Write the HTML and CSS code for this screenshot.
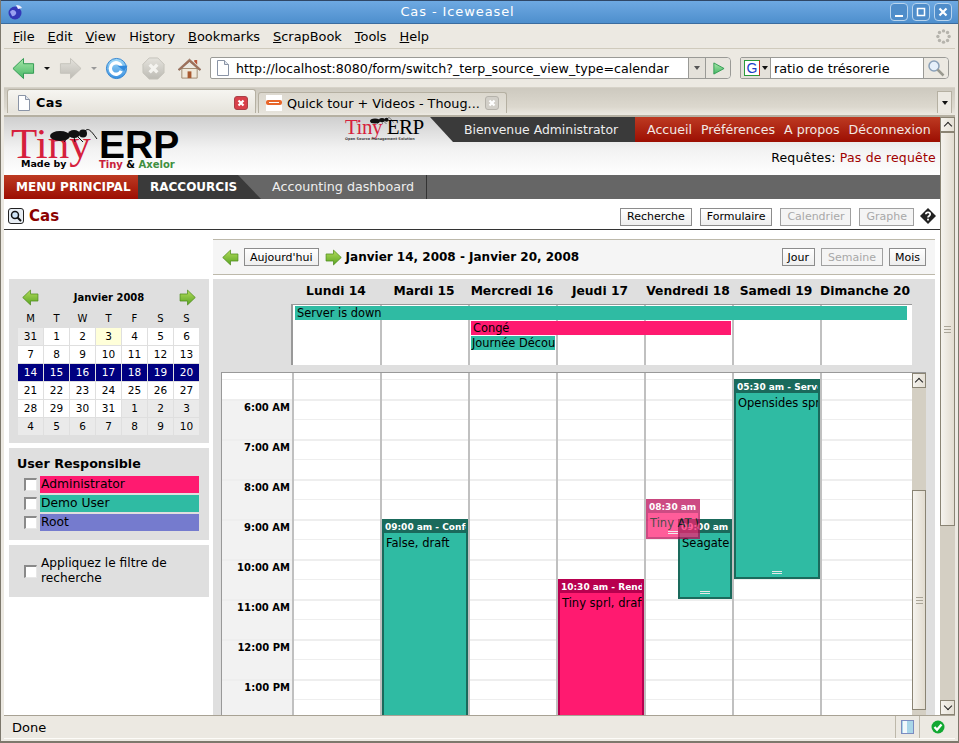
FILE: index.html
```html
<!DOCTYPE html>
<html lang="fr">
<head>
  <meta charset="UTF-8" />
  <title>Cas - Iceweasel</title>
  <link rel="stylesheet" href="styles.css">
</head>
<body>
<svg class="defs" width="0" height="0">
  <defs>
    <linearGradient id="gArrow" x1="0" y1="0" x2="0" y2="1"><stop offset="0" stop-color="#a8e8a8"/><stop offset="1" stop-color="#45b565"/></linearGradient>
    <linearGradient id="gGrey" x1="0" y1="0" x2="0" y2="1"><stop offset="0" stop-color="#e4e2dc"/><stop offset="1" stop-color="#bdbbb4"/></linearGradient>
    <linearGradient id="gLeaf" x1="0" y1="0" x2="0" y2="1"><stop offset="0" stop-color="#b4dc5c"/><stop offset="1" stop-color="#5aa522"/></linearGradient>
    <linearGradient id="gBlue" x1="0" y1="0" x2="0" y2="1"><stop offset="0" stop-color="#a4dcf8"/><stop offset="1" stop-color="#3a90e0"/></linearGradient>
    <symbol id="arrow" viewBox="0 0 24 24"><path d="M1 12 12 1.500V7h10.500v10H12v5.500z"/></symbol>
    <symbol id="page" viewBox="0 0 14 16"><path d="M1.500.5h7l4 4v11h-11z" fill="#fff" stroke="#8a94a6"/><path d="M8.500.5v4h4" fill="#dfe4ec" stroke="#8a94a6"/></symbol>
    <symbol id="x" viewBox="0 0 14 14"><rect x=".5" y=".5" width="13" height="13" rx="2.500"/><path d="m4.500 4.500 5 5m0-5-5 5" stroke="#fff" stroke-width="2.200"/></symbol>
    <symbol id="ant" viewBox="0 0 48 14"><g fill="#111"><ellipse cx="10" cy="8" rx="10" ry="5"/><ellipse cx="24" cy="6" rx="6" ry="4"/><circle cx="33" cy="5.500" r="4"/></g><path d="M35 3c3-3 5-2 12 8M18 9l-4 5M24 9l1 5M28 9l5 5" fill="none" stroke="#111" stroke-width="1"/></symbol>
    <symbol id="glass" viewBox="0 0 18 18"><circle cx="7" cy="7" r="5" fill="#e6f0fa" stroke="#8aa0b8" stroke-width="1.500"/><path d="m10.500 10.500 6 6" stroke="#9a9a90" stroke-width="2.500"/></symbol>
  </defs>
</svg>

<div class="window">
  <div class="titlebar">
    <svg class="app-icon" viewBox="0 0 16 16"><circle cx="8" cy="9" r="6.500" fill="#3438b8"/><path d="M3 8c2-3 5-2 6 0s-2 5-4 4" fill="#9aa0f0"/><path d="M9 1c3 0 5 1 6 3l-4 1z" fill="#eef"/></svg>
    <div class="title">Cas - Iceweasel</div>
    <div class="wm-buttons">
      <span class="wm"><svg viewBox="0 0 14 14"><path d="M3 11h8" stroke="#fff" stroke-width="2"/></svg></span>
      <span class="wm"><svg viewBox="0 0 14 14"><rect x="3.500" y="3.500" width="7" height="7" fill="none" stroke="#fff" stroke-width="1.500"/></svg></span>
      <span class="wm"><svg viewBox="0 0 14 14"><path d="m3.500 3.500 7 7m0-7-7 7" stroke="#fff" stroke-width="2.200"/></svg></span>
    </div>
  </div>

  <div class="menubar">
    <span><u>F</u>ile</span>
    <span><u>E</u>dit</span>
    <span><u>V</u>iew</span>
    <span>Hi<u>s</u>tory</span>
    <span><u>B</u>ookmarks</span>
    <span><u>S</u>crapBook</span>
    <span><u>T</u>ools</span>
    <span><u>H</u>elp</span>
    <svg class="spinner" viewBox="0 0 16 16"><g fill="#b5b3ac"><circle cx="8" cy="2" r="1.800"/><circle cx="12.300" cy="3.700" r="1.800"/><circle cx="14" cy="8" r="1.800"/><circle cx="12.300" cy="12.300" r="1.800"/><circle cx="8" cy="14" r="1.800"/><circle cx="3.700" cy="12.300" r="1.800"/><circle cx="2" cy="8" r="1.800"/><circle cx="3.700" cy="3.700" r="1.800"/></g></svg>
  </div>

  <div class="navbar">
    <svg class="nav-ico back"><use href="#arrow"/></svg>
    <span class="drop"></span>
    <svg class="nav-ico fwd flip"><use href="#arrow"/></svg>
    <span class="drop off"></span>
    <svg class="nav-ico reload" viewBox="0 0 24 24"><circle cx="12" cy="12" r="10.500" fill="url(#gBlue)" stroke="#2a80d0"/><path d="M17 9.500a6 6 0 1 0 0 5" fill="none" stroke="#fff" stroke-width="3.500"/><path d="M13 9h10.500L20 14.500z" fill="#2f88dc"/></svg>
    <svg class="nav-ico stop" viewBox="0 0 24 24"><path d="M7.500 1h9L23 7.500v9L16.500 23h-9L1 16.500v-9z" fill="url(#gGrey)" stroke="#c4c2bb"/><path d="m8 8 8 8m0-8-8 8" stroke="#f4f3ef" stroke-width="3.500"/></svg>
    <svg class="nav-ico home" viewBox="0 0 24 24"><path d="M4 12v10h16V12z" fill="#efe8da" stroke="#a08a70"/><path d="M10 22v-7h4v7z" fill="#a85a30"/><path d="M0 13 12 2l12 11-1.500 1L12 5 1.500 14z" fill="#a0705a" stroke="#7c5a48" stroke-width=".5"/><path d="M17 3h3v5l-3-3z" fill="#b8553a"/></svg>

    <div class="urlbar">
      <svg class="url-page"><use href="#page"/></svg>
      <span class="url-text">http://localhost:8080/form/switch?_terp_source_view_type=calendar</span>
      <span class="url-drop"><i></i></span>
      <span class="url-go"><svg viewBox="0 0 14 14"><path d="M2 1l11 6-11 6z" fill="url(#gArrow)" stroke="#2f9a50"/></svg></span>
    </div>

    <div class="searchbar">
      <span class="engine"><b class="g-mark">G</b><i></i></span>
      <span class="search-text">ratio de trésorerie</span>
      <span class="search-go"><svg><use href="#glass"/></svg></span>
    </div>
  </div>

  <div class="tabbar">
    <div class="tab active">
      <svg class="tab-ico"><use href="#page"/></svg>
      <span class="tab-label">Cas</span>
      <svg class="tab-x red"><use href="#x"/></svg>
    </div>
    <div class="tab">
      <svg class="tab-fav" viewBox="0 0 16 16"><rect width="16" height="16" fill="#fff"/><rect x="0" y="5" width="16" height="5" rx="2" fill="#e8662a"/><rect x="3" y="7" width="10" height="1" fill="#fff"/></svg>
      <span class="tab-label">Quick tour + Videos - Thoug...</span>
      <svg class="tab-x grey"><use href="#x"/></svg>
    </div>
    <span class="tab-list"><i></i></span>
  </div>

  <div class="viewport">
    <div class="page">
      <div class="header">
        <div class="logo">
          <div class="logo-left">
            <div class="logo-tiny">Tiny</div>
            <div class="logo-made">Made by</div>
          </div>
          <div class="logo-right">
            <div class="logo-erp">ERP</div>
            <div class="logo-by"><span class="c-red">Tiny</span> &amp; <span class="c-green">Axelor</span></div>
          </div>
          <svg class="logo-ant"><use href="#ant"/></svg>
        </div>
        <div class="header-right">
          <div class="top-strip">
            <div class="small-logo">
              <div class="small-name"><span class="c-crimson">Tiny</span> ERP</div>
              <div class="small-tag">Open Source Management Solution</div>
              <svg class="small-ant"><use href="#ant"/></svg>
            </div>
            <div class="welcome">Bienvenue Administrator</div>
            <div class="toplinks">
              <span>Accueil</span><span>Préférences</span><span>A propos</span><span>Déconnexion</span>
            </div>
          </div>
          <div class="requests">Requêtes: <span class="c-dark">Pas de requête</span></div>
        </div>
      </div>

      <div class="mainmenu">
        <div class="menu-red">MENU PRINCIPAL</div>
        <div class="menu-dark">RACCOURCIS</div>
        <div class="menu-link">Accounting dashboard</div>
      </div>

      <div class="view-title">
        <svg class="find-ico" viewBox="0 0 16 16"><rect x=".5" y=".5" width="15" height="15" rx="2.500" fill="#e8eef4" stroke="#222"/><circle cx="7" cy="7" r="3.500" fill="#cfe4f6" stroke="#111" stroke-width="1.500"/><path d="m9.500 9.500 3.500 3.500" stroke="#111" stroke-width="2"/></svg>
        <h1>Cas</h1>
        <div class="view-buttons">
          <button>Recherche</button>
          <button>Formulaire</button>
          <button class="off">Calendrier</button>
          <button class="off">Graphe</button>
          <svg class="help" viewBox="0 0 16 16"><path d="M8 0l8 8-8 8-8-8z" fill="#222"/><path d="M5.800 6.200C6 3.800 10.200 3.800 10.200 6.300 10.200 8 8 8 8 9.600" fill="none" stroke="#fff" stroke-width="1.700"/><rect x="7.100" y="10.700" width="1.800" height="1.800" fill="#fff"/></svg>
        </div>
      </div>

      <div class="content">
        <aside class="sidebar">
          <div class="side-box mini-cal">
            <div class="mini-head">
              <svg class="leaf"><use href="#arrow"/></svg>
              <span>Janvier 2008</span>
              <svg class="leaf flip"><use href="#arrow"/></svg>
            </div>
            <div class="mini-grid">
              <b>M</b><b>T</b><b>W</b><b>T</b><b>F</b><b>S</b><b>S</b>
              <span class="other">31</span><span>1</span><span>2</span><span class="today">3</span><span>4</span><span>5</span><span>6</span>
              <span>7</span><span>8</span><span>9</span><span>10</span><span>11</span><span>12</span><span>13</span>
              <span class="sel">14</span><span class="sel">15</span><span class="sel">16</span><span class="sel">17</span><span class="sel">18</span><span class="sel">19</span><span class="sel">20</span>
              <span>21</span><span>22</span><span>23</span><span>24</span><span>25</span><span>26</span><span>27</span>
              <span>28</span><span>29</span><span>30</span><span>31</span><span class="other">1</span><span class="other">2</span><span class="other">3</span>
              <span class="other">4</span><span class="other">5</span><span class="other">6</span><span class="other">7</span><span class="other">8</span><span class="other">9</span><span class="other">10</span>
            </div>
          </div>

          <div class="side-box users">
            <h3>User Responsible</h3>
            <div class="user"><i class="check"></i><span class="c-admin">Administrator</span></div>
            <div class="user"><i class="check"></i><span class="c-demo">Demo User</span></div>
            <div class="user"><i class="check"></i><span class="c-root">Root</span></div>
          </div>

          <div class="side-box filter">
            <i class="check"></i>
            <span>Appliquez le filtre de recherche</span>
          </div>
        </aside>

        <main class="calendar">
          <div class="cal-nav">
            <svg class="leaf"><use href="#arrow"/></svg>
            <button>Aujourd'hui</button>
            <svg class="leaf flip"><use href="#arrow"/></svg>
            <strong>Janvier 14, 2008 - Janvier 20, 2008</strong>
            <div class="cal-modes">
              <button>Jour</button>
              <button class="off">Semaine</button>
              <button>Mois</button>
            </div>
          </div>

          <div class="cal-body">
            <div class="day-heads">
              <span>Lundi 14</span><span>Mardi 15</span><span>Mercredi 16</span><span>Jeudi 17</span><span>Vendredi 18</span><span>Samedi 19</span><span>Dimanche 20</span>
            </div>

            <div class="allday">
              <div class="ad-event ad-server c-demo">Server is down</div>
              <div class="ad-event ad-conge c-admin">Congé</div>
              <div class="ad-event ad-journee c-demo">Journée Découverte</div>
            </div>

            <div class="timegrid">
              <div class="gutter">
                <div class="gutter-top"></div>
                <div class="hour">6:00 AM</div>
                <div class="hour">7:00 AM</div>
                <div class="hour">8:00 AM</div>
                <div class="hour">9:00 AM</div>
                <div class="hour">10:00 AM</div>
                <div class="hour">11:00 AM</div>
                <div class="hour">12:00 PM</div>
                <div class="hour">1:00 PM</div>
              </div>
              <div class="days">
                <div class="event teal ev-mardi">
                  <div class="ev-head">09:00 am - Conférence</div>
                  <div class="ev-text">False, draft</div>
                </div>
                <div class="event pink ev-jeudi">
                  <div class="ev-head">10:30 am - Rendez-vous</div>
                  <div class="ev-text">Tiny sprl, draft</div>
                </div>
                <div class="event teal ev-samedi">
                  <div class="ev-head">05:30 am - Server</div>
                  <div class="ev-text">Opensides sprl</div>
                  <i class="grip"></i>
                </div>
                <div class="event teal ev-seagate">
                  <div class="ev-head">09:00 am - Visite</div>
                  <div class="ev-text">Seagate</div>
                  <i class="grip"></i>
                </div>
                <div class="event pink ev-tiny">
                  <div class="ev-head">08:30 am - Visite</div>
                  <div class="ev-text">Tiny AT Work</div>
                  <i class="grip"></i>
                </div>
              </div>
              <div class="vscroll inner">
                <span class="sb-btn up"></span>
                <span class="sb-trough inner-top"></span>
                <span class="sb-thumb"><i></i></span>
                <span class="sb-trough inner-bottom"></span>
              </div>
            </div>
          </div>
        </main>
      </div>
    </div>

    <div class="vscroll outer">
      <span class="sb-btn up"></span>
      <span class="sb-thumb"><i></i></span>
      <span class="sb-trough"></span>
      <span class="sb-btn down"></span>
    </div>
  </div>

  <div class="statusbar">
    <span class="status-text">Done</span>
    <span class="status-cell sc-book"><svg viewBox="0 0 14 14"><rect x=".5" y=".5" width="12" height="13" fill="#a9d6e8" stroke="#7c8cc0"/><rect x="2" y="1" width="4" height="12" fill="#f2f8fb"/></svg></span>
    <span class="status-cell sc-ok"><svg viewBox="0 0 14 14"><circle cx="7" cy="7" r="6.500" fill="#12a832"/><path d="m3.500 7 2.500 2.700L10.500 4.500" fill="none" stroke="#fff" stroke-width="2.300"/></svg></span>
  </div>
</div>
</body>
</html>
```

FILE: styles.css
```css
* {
  box-sizing: border-box;
}

html, body {
  margin: 0;
  padding: 0;
}

body {
  width: 959px;
  height: 743px;
  overflow: hidden;
  font-family: "DejaVu Sans", sans-serif;
  font-size: 12px;
  color: #000;
  background: #ece9e2;
}

.defs {
  position: absolute;
}

button {
  font-family: "DejaVu Sans", sans-serif;
  font-size: 11px;
  height: 18px;
  padding: 0 6px;
  background: linear-gradient(#fff, #eee);
  border: 1px solid #8c8c8c;
  border-radius: 0;
  color: #000;
}

button.off {
  color: #a8a8a8;
  border-color: #a0a0a0;
  background: #f4f4f4;
}

.flip {
  transform: scaleX(-1);
}

/* window chrome */

.window {
  width: 959px;
  height: 743px;
  display: flex;
  flex-direction: column;
  border: solid #7d786c;
  border-width: 0 1px 2px;
  padding: 0 3px 2px;
  background: #ece9e2;
}

.titlebar {
  height: 24px;
  margin: 0 -3px;
  flex: none;
  display: flex;
  align-items: center;
  position: relative;
  background: linear-gradient(#6ea9e2, #4e8fcd);
  border-top: 1px solid #2f4766;
  border-bottom: 1px solid #3b6c9f;
  color: #fff;
}

.app-icon {
  width: 16px;
  height: 16px;
  margin-left: 6px;
}

.title {
  position: absolute;
  left: 0;
  right: 0;
  text-align: center;
  font-size: 13px;
  line-height: 20px;
  letter-spacing: .9px;
  padding-right: 44px;
}

.wm-buttons {
  margin-left: auto;
  margin-right: 6px;
  display: flex;
  gap: 4px;
}

.wm {
  width: 18px;
  height: 18px;
  border: 1px solid #b8d4ee;
  border-radius: 4px;
  background: #4f8dca;
  display: flex;
  align-items: center;
  justify-content: center;
}

.wm svg {
  width: 14px;
  height: 14px;
}

.menubar {
  height: 25px;
  flex: none;
  display: flex;
  align-items: center;
  gap: 13px;
  font-size: 12.900px;
  border-bottom: 1px solid #cfcabc;
  padding-left: 9px;
}

.spinner {
  width: 15px;
  height: 15px;
  margin-left: auto;
  margin-right: 4px;
}

.navbar {
  height: 39px;
  flex: none;
  display: flex;
  align-items: center;
  padding-left: 8px;
  border-bottom: 1px solid #d6d2c8;
}

.nav-ico {
  width: 23px;
  height: 23px;
  flex: none;
}

.back {
  fill: url(#gArrow);
  stroke: #2f9a50;
}

.fwd {
  margin-left: 9px;
  fill: url(#gGrey);
  stroke: #c4c2bb;
}

.drop {
  width: 0;
  height: 0;
  margin-left: 9px;
  border: 3px solid transparent;
  border-top: 3px solid #111;
  border-bottom: 0;
  flex: none;
}

.drop.off {
  margin-left: 9px;
  border-top-color: #999;
}

.reload { margin-left: 8px; }
.stop { margin-left: 14px; }
.home { margin-left: 13px; }

.urlbar {
  width: 521px;
  height: 22px;
  margin-left: 9px;
  flex: none;
  display: flex;
  align-items: center;
  background: #fff;
  border: 1px solid #9a9a96;
  border-radius: 2px 4px 4px 2px;
  font-size: 12.650px;
}

.url-page {
  width: 14px;
  height: 16px;
  margin-left: 5px;
}

.url-text {
  margin-left: 6px;
  flex: 1;
  white-space: nowrap;
  overflow: hidden;
}

.url-drop {
  width: 17px;
  height: 20px;
  background: #e4e1da;
  border-left: 1px solid #9a9a96;
  display: flex;
  align-items: center;
  justify-content: center;
}

.url-drop i, .engine i, .tab-list i {
  width: 0;
  height: 0;
  border: 3px solid transparent;
  border-top: 4px solid #555;
  border-bottom: 0;
}

.url-go {
  width: 25px;
  height: 20px;
  background: #e8e5de;
  border-left: 1px solid #9a9a96;
  border-radius: 0 4px 4px 0;
  display: flex;
  align-items: center;
  justify-content: center;
}

.url-go svg {
  width: 13px;
  height: 13px;
}

.searchbar {
  width: 209px;
  height: 22px;
  margin-left: 9px;
  flex: none;
  display: flex;
  align-items: center;
  background: #fff;
  border: 1px solid #9a9a96;
  border-radius: 2px 4px 4px 2px;
  font-size: 12.800px;
}

.engine {
  width: 30px;
  height: 20px;
  flex: none;
  background: #e4e1da;
  border-right: 1px solid #9a9a96;
  display: flex;
  align-items: center;
  gap: 2px;
  padding-left: 3px;
}

.engine i {
  border-top-color: #111;
}

.g-mark {
  width: 16px;
  height: 16px;
  font: 14px/14px "Liberation Sans", sans-serif;
  color: #1a3cc8;
  text-align: center;
  background: #fff;
  border: 1px solid;
  border-color: #2a9a3a #d02a20 #2a9a3a #2a9a3a;
}

.search-text {
  margin-left: 3px;
  flex: 1;
}

.search-go {
  width: 25px;
  height: 20px;
  background: #ece9e2;
  border-left: 1px solid #9a9a96;
  border-radius: 0 4px 4px 0;
  display: flex;
  align-items: center;
  justify-content: center;
}

.search-go svg {
  width: 18px;
  height: 18px;
}

.tabbar {
  height: 28px;
  flex: none;
  display: flex;
  align-items: flex-end;
  gap: 2px;
  padding-left: 3px;
  padding-bottom: 2px;
  background: linear-gradient(#cdc9bf, #dcd8ce 70%, #ece9e2);
  border-bottom: 1px solid #b5b0a2;
  font-size: 12.800px;
}

.tab {
  width: 249px;
  height: 21px;
  display: flex;
  align-items: center;
  padding: 0 7px;
  border: 1px solid #b5b0a2;
  border-bottom: 0;
  border-radius: 3px 3px 0 0;
  background: linear-gradient(#dcd8ce, #e6e3db);
}

.tab.active {
  height: 24px;
  padding-top: 2px;
  background: linear-gradient(#f6f5f1, #e6e3db);
}

.tab.active .tab-label {
  font-weight: bold;
  letter-spacing: .3px;
}

.tab-ico {
  width: 14px;
  height: 16px;
  margin-left: 2px;
}

.tab-fav {
  width: 16px;
  height: 16px;
}

.tab-label {
  margin-left: 5px;
  flex: 1;
  white-space: nowrap;
}

.tab-x {
  width: 14px;
  height: 14px;
}

.tab-x.red {
  fill: #d8404a;
  stroke: #a84048;
}

.tab-x.grey {
  fill: #d2cfc8;
  stroke: #b5b2aa;
}

.tab-list {
  margin-left: auto;
  margin-right: 3px;
  width: 15px;
  height: 22px;
  border: 1px solid #b5b0a2;
  border-bottom: 0;
  background: #ece9e2;
  display: flex;
  align-items: center;
  justify-content: center;
}

.tab-list i {
  border-top-color: #111;
}

.viewport {
  flex: 1;
  display: flex;
  min-height: 0;
  overflow: hidden;
  background: #fff;
  border-top: 1px solid #b5b0a2;
}

.page {
  width: 936px;
  flex: none;
  background: #fff;
}

/* header */

.header {
  height: 58px;
  display: flex;
  justify-content: space-between;
  background: linear-gradient(#cfcfcf, #f2f2f2 55%, #fff);
}

.logo {
  position: relative;
  display: flex;
  padding: 9px 0 0 7px;
  width: 200px;
}

.logo-left {
  width: 88px;
}

.logo-tiny {
  font: 43px/35px "Liberation Serif", serif;
  color: #d6203c;
}

.logo-made {
  margin: -4px 0 0 10px;
  font-size: 9.500px;
  font-weight: bold;
  line-height: 13px;
}

.logo-right {
  padding-top: 3px;
}

.logo-erp {
  font: bold 39px/31px "Liberation Sans", sans-serif;
}

.logo-by {
  margin-top: -2px;
  font-size: 10px;
  font-weight: bold;
  line-height: 13px;
}

.c-red { color: #c8203c; }
.c-green { color: #3f8f3f; }
.c-crimson { color: #d6203c; }
.c-dark { color: #a00000; }

.logo-ant {
  position: absolute;
  left: 46px;
  top: 11px;
  width: 48px;
  height: 14px;
}

.header-right {
  display: flex;
  flex-direction: column;
  align-items: flex-end;
}

.top-strip {
  height: 25px;
  display: flex;
}

.small-logo {
  position: relative;
  width: 85px;
  padding-top: 1px;
}

.small-name {
  font: 21px/19px "Liberation Serif", serif;
  letter-spacing: -.5px;
}

.small-tag {
  font-size: 3.500px;
  line-height: 4px;
  white-space: nowrap;
  font-weight: bold;
  color: #444;
}

.small-ant {
  position: absolute;
  left: 25px;
  top: 0;
  width: 24px;
  height: 7px;
}

.welcome {
  width: 205px;
  padding-left: 34px;
  line-height: 25px;
  color: #eee;
  background: #3a3a3a;
  clip-path: polygon(0 0, 100% 0, 100% 100%, 23px 100%);
  font-size: 12.400px;
  white-space: nowrap;
}

.toplinks {
  width: 305px;
  display: flex;
  gap: 9px;
  padding-left: 12px;
  line-height: 25px;
  color: #f2e8e4;
  background: linear-gradient(#bd3a22, #9c0e02);
  font-size: 12.600px;
  white-space: nowrap;
}

.requests {
  margin-top: 8px;
  padding-right: 4px;
  font-size: 12.500px;
  letter-spacing: .2px;
}

/* main menu */

.mainmenu {
  height: 24px;
  display: flex;
  background: #666;
  color: #fff;
  line-height: 24px;
}

.menu-red {
  width: 134px;
  padding-left: 12px;
  font-size: 12px;
  font-weight: bold;
  white-space: nowrap;
  background: linear-gradient(#bd3a22, #9c0e02);
}

.menu-dark {
  width: 123px;
  padding-left: 12px;
  font-size: 12px;
  font-weight: bold;
  background: #3a3a3a;
  clip-path: polygon(0 0, 100px 0, 123px 100%, 0 100%);
}

.menu-link {
  width: 166px;
  padding-left: 11px;
  border-right: 1px solid #333;
  color: #eee;
  font-size: 12.700px;
  white-space: nowrap;
}

.view-title {
  height: 31px;
  display: flex;
  align-items: center;
  padding: 4px 4px 0;
  border-bottom: 1px solid #333;
}

.find-ico {
  width: 16px;
  height: 16px;
}

.view-title h1 {
  margin: 0 0 0 5px;
  font-size: 15px;
  color: #8b0000;
}

.view-buttons {
  margin-left: auto;
  display: flex;
  align-items: center;
  gap: 8px;
  padding-top: 1px;
}

.help {
  width: 16px;
  height: 16px;
  margin-left: -2px;
  margin-top: -2px;
}

.content {
  display: flex;
}

/* sidebar */

.sidebar {
  width: 209px;
  flex: none;
  padding: 49px 4px 0 5px;
  display: flex;
  flex-direction: column;
  gap: 5px;
}

.side-box {
  background: #dfdfdf;
}

.mini-cal {
  height: 164px;
  padding: 8px 9px 0;
}

.mini-head {
  height: 20px;
  display: flex;
  align-items: center;
  justify-content: space-between;
  padding: 0 4px;
  font-size: 10px;
  font-weight: bold;
}

.leaf {
  width: 17px;
  height: 17px;
  fill: url(#gLeaf);
  stroke: #4a8a18;
  flex: none;
}

.mini-grid {
  display: grid;
  grid-template-columns: repeat(7, 25px);
  grid-template-rows: 17px repeat(6, 17px);
  gap: 1px;
  margin-top: 3px;
  font-size: 10.500px;
  text-align: center;
  line-height: 17px;
}

.mini-grid b {
  font-weight: normal;
  font-size: 10px;
  margin-bottom: -2px;
}

.mini-grid span {
  background: #fff;
}

.mini-grid .other {
  background: #eaeaea;
}

.mini-grid .today {
  background: #ffffd9;
}

.mini-grid .sel {
  background: #000080;
  color: #fff;
}

.users {
  height: 92px;
  padding: 8px 0 0 8px;
}

.users h3 {
  margin: 0 0 4px;
  font-size: 12.700px;
  line-height: 15px;
}

.user {
  display: flex;
  align-items: center;
  height: 19px;
  padding-left: 7px;
  font-size: 12.300px;
}

.user span {
  width: 159px;
  height: 17px;
  padding-left: 1px;
  line-height: 17px;
}

.c-admin { background: #ff1a70; }
.c-demo { background: #2fbba3; }
.c-root { background: #757bce; }

.check {
  width: 13px;
  height: 13px;
  flex: none;
  margin-right: 3px;
  background: #fff;
  border: 1px solid;
  border-color: #8a8a8a #e8e8e8 #e8e8e8 #8a8a8a;
  border-width: 2px 1px 1px 2px;
}

.filter {
  height: 52px;
  display: flex;
  align-items: center;
  padding-left: 15px;
  font-size: 12.200px;
  line-height: 15px;
}

.filter .check {
  margin-right: 4px;
}

/* calendar */

.calendar {
  width: 722px;
  flex: none;
}

.cal-nav {
  height: 36px;
  margin-top: 9px;
  display: flex;
  align-items: center;
  padding: 0 9px;
  gap: 3px;
  background: #f5f5f5;
  border: solid #bdb9ab;
  border-width: 1px 0;
}

.cal-nav > button {
  margin: 0 3px 0 2px;
  padding: 0 5px;
}

.cal-nav strong {
  margin-left: 1px;
  font-size: 12px;
}

.cal-modes {
  margin-left: auto;
  display: flex;
  gap: 6px;
}

.cal-modes button:first-child,
.cal-modes button:last-child {
  padding: 0 5px;
}

.cal-body {
  margin-top: 4px;
  height: 436px;
  background: #dfdfdf;
  padding-left: 8px;
  overflow: hidden;
}

.day-heads {
  height: 25px;
  margin-left: 71px;
  display: grid;
  grid-template-columns: repeat(7, 88px);
  font-size: 12.300px;
  font-weight: bold;
  line-height: 24px;
  text-align: center;
  white-space: nowrap;
}

.allday {
  width: 621px;
  height: 61px;
  margin-left: 70px;
  display: grid;
  grid-template-columns: 87px repeat(6, 88px) 6px;
  grid-template-rows: 15px 15px 15px;
  background: #fff repeating-linear-gradient(90deg, #c0c0c0 0 2px, transparent 2px 88px) 87px 0 / 442px 100% no-repeat;
  border: solid #999;
  border-width: 1px 0 0 2px;
  font-size: 11.400px;
  line-height: 15px;
}

.ad-event {
  height: 14px;
  margin: 1px 1px 0 3px;
  padding-left: 2px;
  white-space: nowrap;
  overflow: hidden;
}

.ad-server {
  grid-row: 1;
  grid-column: 1 / 8;
  margin-left: 2px;
}

.ad-conge {
  grid-row: 2;
  grid-column: 3 / 6;
}

.ad-journee {
  grid-row: 3;
  grid-column: 3;
  padding-left: 1px;
}

.timegrid {
  width: 705px;
  height: 343px;
  margin-top: 7px;
  display: flex;
  border: solid #999;
  border-width: 1px 0 0 1px;
}

.gutter {
  width: 70px;
  flex: none;
  background: #f2f2f2;
  font-size: 10px;
  font-weight: bold;
  text-align: right;
}

.gutter-top {
  height: 26px;
  background: #fff linear-gradient(#eee, #eee) 0 6px / 100% 1px no-repeat;
}

.hour {
  height: 40px;
  padding: 1px 2px 0 0;
  line-height: 12px;
  border-top: 2px solid #eee;
  white-space: nowrap;
}

.days {
  position: relative;
  width: 620px;
  flex: none;
  overflow: hidden;
  background-color: #fff;
  background-image:
    repeating-linear-gradient(90deg, #c0c0c0 0 2px, transparent 2px 88px),
    repeating-linear-gradient(180deg, #eee 0 2px, transparent 2px 20px, #eee 20px 21px, transparent 21px 40px);
  background-position: 0 0, 0 26px;
  background-size: 530px 100%, 100% 40px;
  background-repeat: no-repeat, repeat-y;
}

/* events are placed by time and day on the grid */

.event {
  position: absolute;
  overflow: hidden;
  border: 2px solid;
  border-top: 0;
  width: 86px;
}

.ev-head {
  height: 14px;
  margin: 0 -2px;
  padding: 1px 0 0 3px;
  color: #fff;
  font-size: 9px;
  font-weight: bold;
  line-height: 14px;
  white-space: nowrap;
  overflow: hidden;
}

.ev-text {
  padding: 3px 0 0 2px;
  font-size: 11.500px;
  line-height: 14px;
  white-space: nowrap;
  overflow: hidden;
}

.grip {
  position: absolute;
  left: 50%;
  bottom: 3px;
  width: 10px;
  height: 3px;
  margin-left: -5px;
  border: solid #e8e8e8;
  border-width: 1px 0;
}

.teal {
  background: #2fbba3;
  border-color: #1a6a5c;
}

.teal .ev-head {
  background: #1a6a5c;
}

.pink {
  background: #ff1a70;
  border-color: #b8004f;
}

.pink .ev-head {
  background: #b8004f;
}

.ev-mardi { left: 90px; top: 146px; height: 300px; }
.ev-jeudi { left: 266px; top: 206px; height: 300px; }
.ev-samedi { left: 442px; top: 6px; height: 200px; }
.ev-seagate { left: 386px; top: 146px; height: 80px; width: 54px; }
.ev-tiny { left: 354px; top: 126px; height: 40px; width: 54px; opacity: .7; }

/* scrollbars */

.vscroll {
  width: 15px;
  flex: none;
  display: flex;
  flex-direction: column;
  background: #d4cfc3;
}

.vscroll.inner {
  width: 14px;
}

.sb-btn {
  height: 15px;
  flex: none;
  background: linear-gradient(90deg, #f5f3ee, #e4dfd4);
  border: 1px solid #8a8474;
  display: flex;
  align-items: center;
  justify-content: center;
}

.sb-btn::before {
  content: "";
  width: 5px;
  height: 5px;
  margin-top: 3px;
  border: solid #222;
  border-width: 1.500px 0 0 1.500px;
  transform: rotate(45deg);
}

.sb-btn.down::before {
  margin-top: -3px;
  transform: rotate(225deg);
}

.sb-trough {
  flex: 1;
}

.sb-thumb {
  flex: none;
  display: flex;
  align-items: center;
  justify-content: center;
  background: linear-gradient(90deg, #f5f3ee, #e2dcd0);
  border: 1px solid #8a8474;
}

.sb-thumb i {
  width: 7px;
  height: 7px;
  border: solid #aaa598;
  border-width: 1px 0;
  background: linear-gradient(#aaa598, #aaa598) 0 2px / 100% 1px no-repeat;
}

.outer .sb-thumb {
  height: 394px;
}

.inner-top {
  height: 102px;
  flex: none;
}

.inner .sb-thumb {
  height: 220px;
}

.inner-bottom {
  flex: 1;
}

/* status bar */

.statusbar {
  height: 24px;
  flex: none;
  display: flex;
  align-items: center;
  font-size: 13px;
  border-top: 1px solid #a8a294;
  border-bottom: 1px solid #fdfcf8;
}

.status-text {
  flex: 1;
  padding-left: 8px;
}

.status-cell {
  height: 22px;
  display: flex;
  align-items: center;
  justify-content: center;
  border-left: 1px solid #bdb8aa;
}

.status-cell svg {
  width: 14px;
  height: 14px;
}

.sc-book {
  width: 24px;
}

.sc-ok {
  width: 36px;
}
```
